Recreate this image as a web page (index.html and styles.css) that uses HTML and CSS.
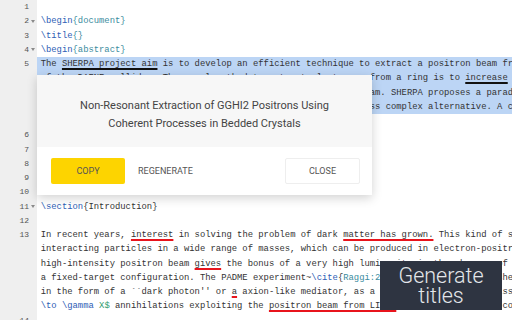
FILE: index.html
```html
<!DOCTYPE html>
<html>
<head>
<meta charset="utf-8">
<link rel="stylesheet" href="styles.css">
</head>
<body>
<div class="editor">
  <div class="row"><span class="gut"><span class="num">1</span><span class="fold"></span></span><span class="code"></span></div>
  <div class="row"><span class="gut"><span class="num">2</span><span class="fold on"></span></span><span class="code"><span class="kw">\begin</span><span class="arg">{document}</span></span></div>
  <div class="row"><span class="gut"><span class="num">3</span><span class="fold"></span></span><span class="code"><span class="kw">\title</span><span class="arg">{}</span></span></div>
  <div class="row"><span class="gut"><span class="num">4</span><span class="fold on"></span></span><span class="code"><span class="kw">\begin</span><span class="arg">{abstract}</span></span></div>
  <div class="row"><span class="gut"><span class="num">5</span><span class="fold"></span></span><span class="code sel">The <span class="u-k">SHERPA project aim</span> is to develop an efficient technique to extract a positron beam from the DAFNE</span></div>
  <div class="row"><span class="gut"><span class="num"></span><span class="fold"></span></span><span class="code sel">of the DAFNE collider. The usual method to extract electrons, from a ring is to <span class="u-k">increase</span> the</span></div>
  <div class="row"><span class="gut"><span class="num"></span><span class="fold"></span></span><span class="code sel">intensity of the resonance, perturbing the circulating main beam. SHERPA proposes a paradigm</span></div>
  <div class="row"><span class="gut"><span class="num"></span><span class="fold"></span></span><span class="code sel">into the beam dynamics, and the crystal method offers a far less complex alternative. A crystal</span></div>
  <div class="row"><span class="gut"><span class="num"></span><span class="fold"></span></span><span class="code"><span class="sel">crystal-based extraction is studied.</span></span></div>
  <div class="row"><span class="gut"><span class="num">6</span><span class="fold"></span></span><span class="code"><span class="kw">\end</span><span class="arg">{abstract}</span></span></div>
  <div class="row"><span class="gut"><span class="num">7</span><span class="fold"></span></span><span class="code"></span></div>
  <div class="row"><span class="gut"><span class="num">8</span><span class="fold"></span></span><span class="code"><span class="kw">\maketitle</span></span></div>
  <div class="row"><span class="gut"><span class="num">9</span><span class="fold"></span></span><span class="code"></span></div>
  <div class="row"><span class="gut"><span class="num">10</span><span class="fold"></span></span><span class="code"></span></div>
  <div class="row"><span class="gut"><span class="num">11</span><span class="fold on"></span></span><span class="code"><span class="kw">\section</span>{Introduction}</span></div>
  <div class="row"><span class="gut"><span class="num">12</span><span class="fold"></span></span><span class="code"></span></div>
  <div class="row"><span class="gut"><span class="num">13</span><span class="fold"></span></span><span class="code">In recent years, <span class="u-r">interest</span> in solving the problem of dark <span class="u-r">matter has grown.</span> This kind of study</span></div>
  <div class="row"><span class="gut"><span class="num"></span><span class="fold"></span></span><span class="code">interacting particles in a wide range of masses, which can be produced in electron-positron</span></div>
  <div class="row"><span class="gut"><span class="num"></span><span class="fold"></span></span><span class="code">high-intensity positron beam <span class="u-r">gives</span> the bonus of a very high luminosity in the absence of a</span></div>
  <div class="row"><span class="gut"><span class="num"></span><span class="fold"></span></span><span class="code">a fixed-target configuration. The PADME experiment~<span class="kw">\cite</span>{<span class="arg">Raggi:2015gza</span>} has been published</span></div>
  <div class="row"><span class="gut"><span class="num"></span><span class="fold"></span></span><span class="code">in the form of a ``dark photon'' or <span class="u-r">a</span> axion-like mediator, as a new vector boson, of mass</span></div>
  <div class="row"><span class="gut"><span class="num"></span><span class="fold"></span></span><span class="code"><span class="kw">\to</span> <span class="kw">\gamma</span> <span class="math">X$</span> annihilations exploiting the <span class="u-r">positron beam from LINAC</span> facility, which is con</span></div>
  <div class="row"><span class="gut"><span class="num">14</span><span class="fold"></span></span><span class="code"></span></div>
</div>

<div class="popup">
  <div class="popup-title">Non-Resonant Extraction of GGHI2 Positrons Using<br>Coherent Processes in Bedded Crystals</div>
  <div class="popup-actions">
    <span class="btn btn-copy">COPY</span>
    <span class="btn btn-text">REGENERATE</span>
    <span class="btn btn-close">CLOSE</span>
  </div>
</div>

<div class="badge"><span>Generate</span><span>titles</span></div>
</body>
</html>
```
FILE: styles.css
```css
html, body {
  margin: 0;
  padding: 0;
  width: 512px;
  height: 320px;
  overflow: hidden;
  background: #fff;
}
body {
  position: relative;
  font-family: "Liberation Mono", "DejaVu Sans Mono", monospace;
}
.editor {
  display: flex;
  flex-direction: column;
}
.row {
  display: flex;
  flex: none;
  height: 14.25px;
  line-height: 14.25px;
  font-size: 8.85px;
  color: #333;
}
.gut {
  width: 37px;
  flex: none;
  display: flex;
  align-items: center;
  background: #efefef;
}
.num {
  width: 29px;
  text-align: right;
  font-size: 8px;
  color: #555;
}
.fold {
  width: 8px;
  display: flex;
  justify-content: center;
  align-items: center;
}
.fold.on::before {
  content: "";
  border-left: 2px solid transparent;
  border-right: 2px solid transparent;
  border-top: 3px solid #8a8a8a;
}
.code {
  flex: 1;
  min-width: 0;
  white-space: pre;
  overflow: hidden;
  padding-left: 3.7px;
}
.sel {
  background: #bcd5f5;
}
.kw { color: #2d5db5; }
.arg { color: #3b8c9e; }
.math { color: #2f9a6c; }
.u-k {
  text-decoration: underline;
  text-decoration-color: #111;
  text-decoration-thickness: 1.5px;
  text-underline-offset: 2px;
}
.u-r {
  text-decoration: underline;
  text-decoration-color: #e8141c;
  text-decoration-thickness: 1.5px;
  text-underline-offset: 2px;
}

.popup {
  position: absolute;
  left: 37px;
  top: 75px;
  width: 335px;
  background: #fff;
  box-shadow: 0 3px 10px rgba(0, 0, 0, 0.18);
  font-family: Roboto, "Liberation Sans", sans-serif;
}
.popup-title {
  height: 72px;
  box-sizing: border-box;
  padding-top: 22px;
  background: #f7f7f7;
  text-align: center;
  font-size: 11px;
  line-height: 18px;
  color: #444;
}
.popup-actions {
  height: 48px;
  display: flex;
  align-items: center;
  padding: 0 12px 0 14px;
}
.btn {
  height: 26px;
  display: flex;
  align-items: center;
  justify-content: center;
  font-size: 9px;
  color: #555;
  border-radius: 2px;
  box-sizing: border-box;
}
.btn-copy {
  width: 74px;
  background: #fdd400;
}
.btn-text {
  margin-left: 13px;
}
.btn-close {
  margin-left: auto;
  width: 75px;
  border: 1px solid #eee;
  background: #fff;
}

.badge {
  position: absolute;
  left: 380px;
  top: 261px;
  width: 122px;
  height: 49px;
  background: #2e3441;
  color: #e3e6ea;
  font-family: Roboto, "Liberation Sans", sans-serif;
  font-weight: 300;
  font-size: 21.5px;
  line-height: 20px;
  display: flex;
  flex-direction: column;
  align-items: center;
  justify-content: center;
}
```
